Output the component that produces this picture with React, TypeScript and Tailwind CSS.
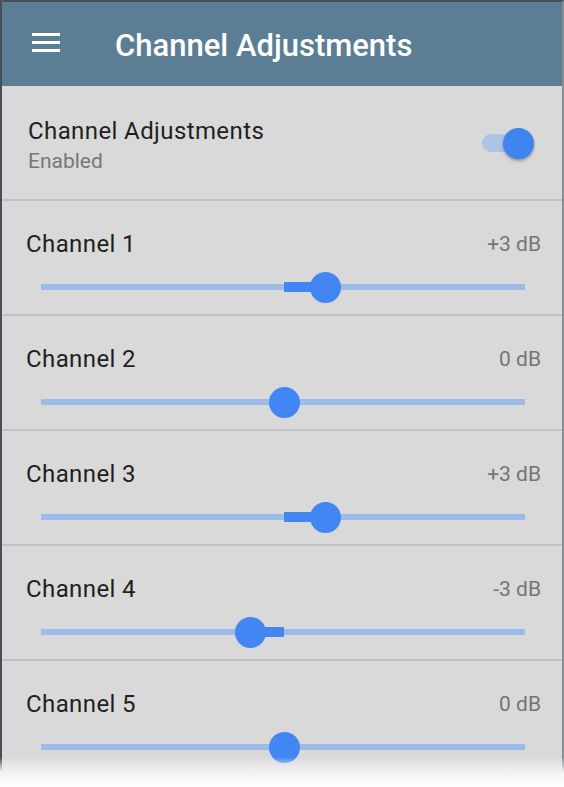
const channels = [
  { name: 'Channel 1', db: 3 },
  { name: 'Channel 2', db: 0 },
  { name: 'Channel 3', db: 3 },
  { name: 'Channel 4', db: -3 },
  { name: 'Channel 5', db: 0 },
];

function formatDb(db: number) {
  if (db > 0) return `+${db} dB`;
  return `${db} dB`;
}

function Slider({ db }: { db: number }) {
  // track is 484px wide, center at 243
  const center = 243;
  const pos = db > 0 ? center + db * 13.7 : center + db * 11.3;
  const left = Math.min(center, pos);
  const width = Math.abs(pos - center);

  return (
    <div className="relative ml-[39px] w-[484px] h-[6px] bg-[#9dbbe7]">
      {width > 0 && (
        <div
          className="absolute top-[-2px] h-[10px] bg-[#4286f4]"
          style={{ left, width }}
        />
      )}
      <div
        className="absolute top-[-12px] w-[31px] h-[31px] rounded-full bg-[#4286f4]"
        style={{ left: pos - 15.5 }}
      />
    </div>
  );
}

export default function App() {
  return (
    <div className="relative w-[564px] h-[787px] bg-white overflow-hidden font-['Roboto',sans-serif]">
      <div className="h-[787px] border-t-2 border-l-2 border-r-2 border-t-[#4a4f55] border-l-[#4a4f55] border-r-[#8a8d90] bg-[#d9d9d9]">
        <header className="h-[84px] bg-[#5b7e95] flex items-center">
          <svg width="28" height="20" viewBox="0 0 28 20" className="ml-[30px] mt-[-2px]">
            <rect x="0" y="0" width="28" height="3" fill="#fff" />
            <rect x="0" y="8" width="28" height="3" fill="#fff" />
            <rect x="0" y="16" width="28" height="3" fill="#fff" />
          </svg>
          <h1 className="ml-[55px] text-white text-[31px] font-medium leading-none mt-[2px]">
            Channel Adjustments
          </h1>
        </header>

        <div className="h-[115px] border-b-2 border-[#c2c2c2] flex items-center pl-[26px] pr-[26px]">
          <div className="flex-1 mt-[6px]">
            <div className="text-[24px] tracking-[0.4px] leading-[30px] text-[#1f1f1f]">Channel Adjustments</div>
            <div className="text-[21px] leading-[30px] text-[#777777]">Enabled</div>
          </div>
          <div className="relative w-[52px] h-[31px] mt-[2px] mr-[2px]">
            <div className="absolute left-[0px] top-[6px] w-[44px] h-[18px] rounded-full bg-[#aec4e6]" />
            <div className="absolute right-0 top-0 w-[31px] h-[31px] rounded-full bg-[#4084ef] shadow-[0_2px_3px_rgba(0,0,0,0.3)]" />
          </div>
        </div>

        {channels.map((ch) => (
          <div key={ch.name} className="h-[115px] border-b-2 border-[#c2c2c2] pt-[29px]">
            <div className="flex items-center justify-between pl-[24px] pr-[21px]">
              <span className="text-[24px] tracking-[0.4px] leading-[28px] text-[#1f1f1f]">{ch.name}</span>
              <span className="text-[21px] leading-[28px] text-[#757575]">{formatDb(ch.db)}</span>
            </div>
            <div className="mt-[26px]">
              <Slider db={ch.db} />
            </div>
          </div>
        ))}
      </div>
      <div className="absolute left-0 right-0 bottom-0 h-[30px] bg-gradient-to-b from-transparent via-[#f2f2f2] to-white" />
    </div>
  );
}
